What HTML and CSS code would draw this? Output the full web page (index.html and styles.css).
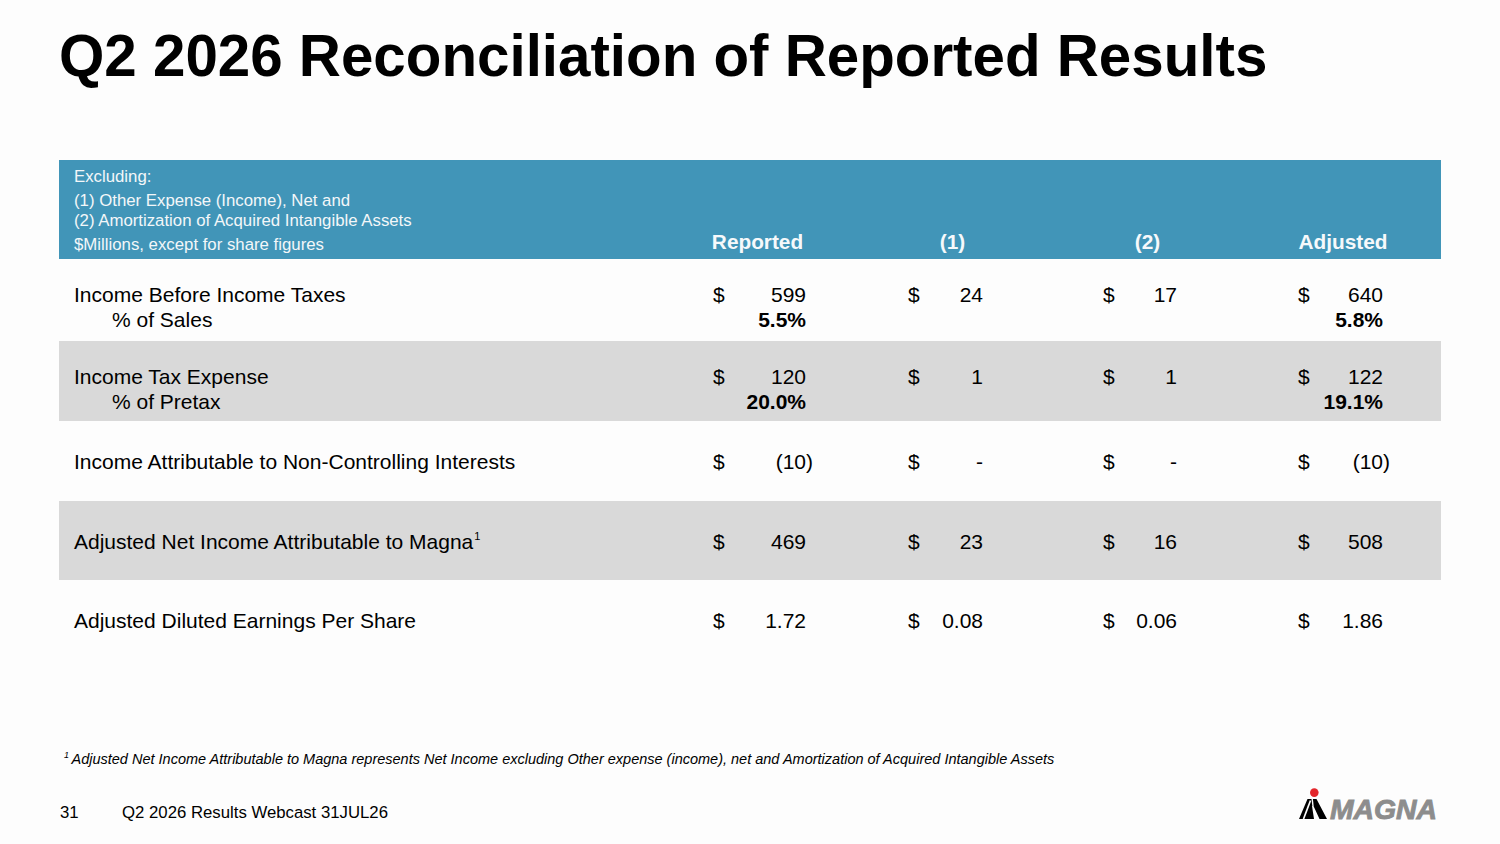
FILE: index.html
```html
<!DOCTYPE html>
<html lang="en">
<head>
<meta charset="utf-8">
<title>Q2 2026 Reconciliation of Reported Results</title>
<link rel="stylesheet" href="styles.css">
</head>
<body>
<div class="slide">
  <h1 class="title">Q2 2026 Reconciliation of Reported Results</h1>

  <div class="table">
    <div class="thead">
      <div class="hlabel">
        <div class="hl hl-first">Excluding:</div>
        <div class="hl hl-gap">(1) Other Expense (Income), Net and</div>
        <div class="hl">(2) Amortization of Acquired Intangible Assets</div>
        <div class="hl hl-gap">$Millions, except for share figures</div>
      </div>
      <div class="hcol">Reported</div>
      <div class="hcol">(1)</div>
      <div class="hcol">(2)</div>
      <div class="hcol">Adjusted</div>
    </div>

    <div class="row white two h82">
      <div class="label"><div>Income Before Income Taxes</div><div class="indent">% of Sales</div></div>
      <div class="cell"><div class="line"><span class="cur">$</span><span class="val">599</span></div><div class="line"><span class="val bold">5.5%</span></div></div>
      <div class="cell"><div class="line"><span class="cur">$</span><span class="val">24</span></div></div>
      <div class="cell"><div class="line"><span class="cur">$</span><span class="val">17</span></div></div>
      <div class="cell"><div class="line"><span class="cur">$</span><span class="val">640</span></div><div class="line"><span class="val bold">5.8%</span></div></div>
    </div>

    <div class="row gray two">
      <div class="label"><div>Income Tax Expense</div><div class="indent">% of Pretax</div></div>
      <div class="cell"><div class="line"><span class="cur">$</span><span class="val">120</span></div><div class="line"><span class="val bold">20.0%</span></div></div>
      <div class="cell"><div class="line"><span class="cur">$</span><span class="val">1</span></div></div>
      <div class="cell"><div class="line"><span class="cur">$</span><span class="val">1</span></div></div>
      <div class="cell"><div class="line"><span class="cur">$</span><span class="val">122</span></div><div class="line"><span class="val bold">19.1%</span></div></div>
    </div>

    <div class="row white one">
      <div class="label"><div>Income Attributable to Non-Controlling Interests</div></div>
      <div class="cell"><div class="line"><span class="cur">$</span><span class="val neg">(10)</span></div></div>
      <div class="cell"><div class="line"><span class="cur">$</span><span class="val">-</span></div></div>
      <div class="cell"><div class="line"><span class="cur">$</span><span class="val">-</span></div></div>
      <div class="cell"><div class="line"><span class="cur">$</span><span class="val neg">(10)</span></div></div>
    </div>

    <div class="row gray one h79">
      <div class="label"><div>Adjusted Net Income Attributable to Magna<sup class="sup">1</sup></div></div>
      <div class="cell"><div class="line"><span class="cur">$</span><span class="val">469</span></div></div>
      <div class="cell"><div class="line"><span class="cur">$</span><span class="val">23</span></div></div>
      <div class="cell"><div class="line"><span class="cur">$</span><span class="val">16</span></div></div>
      <div class="cell"><div class="line"><span class="cur">$</span><span class="val">508</span></div></div>
    </div>

    <div class="row white one">
      <div class="label"><div>Adjusted Diluted Earnings Per Share</div></div>
      <div class="cell"><div class="line"><span class="cur">$</span><span class="val">1.72</span></div></div>
      <div class="cell"><div class="line"><span class="cur">$</span><span class="val">0.08</span></div></div>
      <div class="cell"><div class="line"><span class="cur">$</span><span class="val">0.06</span></div></div>
      <div class="cell"><div class="line"><span class="cur">$</span><span class="val">1.86</span></div></div>
    </div>
  </div>

  <p class="footnote"><sup class="fsup">1</sup> Adjusted Net Income Attributable to Magna represents Net Income excluding Other expense (income), net and Amortization of Acquired Intangible Assets</p>

  <div class="footer">
    <div class="foot-left">
      <span class="page">31</span>
      <span class="event">Q2 2026 Results Webcast 31JUL26</span>
    </div>
    <svg class="logo" width="146" height="40" viewBox="0 0 146 40" aria-label="Magna">
      <circle cx="18.3" cy="7.6" r="4.3" fill="#e3262b"/>
      <polygon points="3,34 11.5,14 20.5,14 31,34 23.5,34 17.5,21 16,21 18,34 10,34" fill="#000"/>
      <line x1="7.5" y1="34" x2="14.5" y2="15.5" stroke="#fdfdfd" stroke-width="1.7"/>
      <line x1="17" y1="21" x2="16.2" y2="14" stroke="#fdfdfd" stroke-width="1.4"/>
      <text x="34" y="34" class="logo-text" textLength="107" lengthAdjust="spacingAndGlyphs">MAGNA</text>
    </svg>
  </div>
</div>
</body>
</html>
```

FILE: styles.css
```css
* { box-sizing: border-box; }

html, body {
  margin: 0;
  padding: 0;
  background: #fdfdfd;
}

body {
  font-family: "Liberation Sans", Arial, sans-serif;
  color: #000;
  width: 1500px;
  height: 844px;
  overflow: hidden;
}

.slide {
  width: 1500px;
  height: 844px;
  padding: 27px 58px 0 59px;
}

.title {
  margin: 0;
  font-size: 58.3px;
  line-height: 58px;
  font-weight: 700;
  white-space: nowrap;
}

.table {
  margin-top: 75px;
  width: 1382px;
}

.thead,
.row {
  display: grid;
  grid-template-columns: 601px 195px 195px 195px 196px;
}

.thead {
  background: #4195b8;
  height: 99px;
  color: #f3f7f9;
}

.hlabel {
  padding: 7px 0 0 15px;
  font-size: 16.8px;
  line-height: 20px;
  white-space: nowrap;
}

.hl-gap { margin-top: 4px; }

.hcol {
  align-self: end;
  text-align: center;
  font-size: 20.8px;
  line-height: 24px;
  font-weight: 700;
  padding-bottom: 5px;
  color: #f6f9fb;
}

.row {
  height: 80px;
  font-size: 21px;
  line-height: 25px;
}

.row.h82 { height: 82px; }
.row.h79 { height: 79px; }

.row.two { padding-top: 23px; }
.row.one { padding-top: 28px; }

.white { background: #fdfdfd; }
.gray { background: #d9d9d9; }

.label {
  padding-left: 15px;
  white-space: nowrap;
}

.indent { padding-left: 38px; }

.sup {
  font-size: 11px;
  vertical-align: top;
  line-height: 14px;
  margin-left: 1px;
}

.cell {
  padding-left: 53px;
}

.cell:nth-child(2) { padding-right: 42px; }
.cell:nth-child(3) { padding-right: 60px; }
.cell:nth-child(4) { padding-right: 61px; }
.cell:nth-child(5) { padding-right: 51px; }

.line {
  display: flex;
}

.cur {
  flex: none;
}

.val {
  flex: 1;
  text-align: right;
  padding-right: 7px;
}

.val.neg { padding-right: 0; }

.bold { font-weight: 700; }

.footnote {
  margin: 90px 0 0 5px;
  font-size: 14.5px;
  line-height: 18px;
  font-style: italic;
  white-space: nowrap;
}

.fsup {
  font-size: 9px;
  vertical-align: top;
  line-height: 10px;
  margin-right: -1px;
}

.footer {
  margin-top: 17px;
  display: flex;
  justify-content: space-between;
  align-items: flex-start;
  height: 40px;
}

.foot-left {
  display: flex;
  font-size: 16.75px;
  line-height: 20px;
  padding-left: 1px;
  padding-top: 18px;
}

.page { width: 62px; }

.logo { display: block; }

.logo-text {
  font-family: "Liberation Sans", Arial, sans-serif;
  font-weight: 700;
  font-style: italic;
  font-size: 28px;
  fill: #8d8d8d;
  stroke: #8d8d8d;
  stroke-width: 0.9px;
}
```
